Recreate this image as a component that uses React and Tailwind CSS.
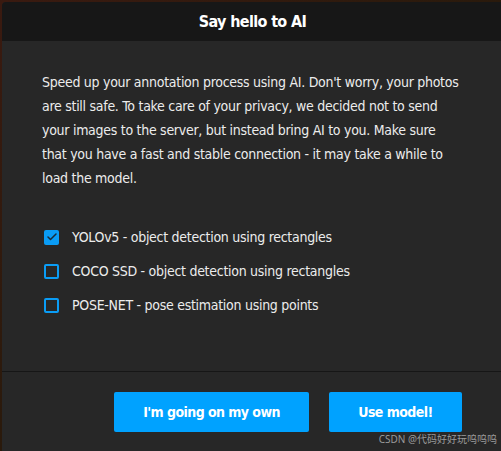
import { Check } from "lucide-react";

const FONT = { fontFamily: "'DejaVu Sans Condensed', 'DejaVu Sans', sans-serif" };

const lines = [
  "Speed up your annotation process using AI. Don't worry, your photos",
  "are still safe. To take care of your privacy, we decided not to send",
  "your images to the server, but instead bring AI to you. Make sure",
  "that you have a fast and stable connection - it may take a while to",
  "load the model.",
];

const models = [
  { name: "YOLOv5 - object detection using rectangles", checked: true },
  { name: "COCO SSD - object detection using rectangles", checked: false },
  { name: "POSE-NET - pose estimation using points", checked: false },
];

export default function App() {
  return (
    <div style={FONT} className="h-[451px] w-[501px] overflow-hidden bg-gradient-to-br from-[#3a1a10] via-[#2a1a0c] to-[#4a2a08] pl-[2px] pt-[2px]">
      <div className="flex h-[460px] w-[510px] flex-col overflow-hidden rounded-[4px] bg-[#272727] text-[#e6e6e6]">
        {/* Header */}
        <div className="flex h-[39px] shrink-0 items-center justify-center bg-[#171717] pr-[9px] pt-[1px] text-[16px] font-bold tracking-[-0.04em] text-white">
          Say hello to AI
        </div>

        {/* Body */}
        <div className="flex h-[330px] shrink-0 flex-col px-[40px] pt-[29px]">
          <div className="text-[14px] leading-[24px] tracking-[-0.02em] text-[#ececec]">
            {lines.map((l) => (
              <p key={l} className="whitespace-nowrap">{l}</p>
            ))}
          </div>
          <div className="mt-[37px] flex flex-col gap-[14px]">
            {models.map((m) => (
              <div key={m.name} className="flex h-[20px] items-center gap-[13px] pl-[2px]">
                <span
                  className={
                    m.checked
                      ? "flex h-[15px] w-[15px] items-center justify-center rounded-[2px] bg-[#0a9cf5]"
                      : "h-[15px] w-[15px] rounded-[2px] border-[2px] border-[#0a9cf5]"
                  }
                >
                  {m.checked && <Check size={12} strokeWidth={3} className="text-[#1b2a35]" />}
                </span>
                <span className="whitespace-nowrap text-[14px] tracking-[-0.02em] text-[#ececec]">{m.name}</span>
              </div>
            ))}
          </div>
        </div>

        {/* Footer */}
        <div className="relative flex grow items-start border-t border-[#161616] pl-[112px] pt-[20px]">
          <div className="flex gap-[20px]">
            <button className="flex h-[40px] w-[195px] items-center justify-center rounded-[2px] bg-[#00a2ff] text-[14px] font-bold tracking-[-0.04em] text-white">
              I'm going on my own
            </button>
            <button className="flex h-[40px] w-[133px] items-center justify-center rounded-[2px] bg-[#00a2ff] text-[14px] font-bold tracking-[-0.04em] text-white">
              Use model!
            </button>
          </div>
          <span
            style={{ fontFamily: "'Noto Sans', 'Noto Sans CJK SC', sans-serif" }}
            className="absolute right-[15px] top-[60px] whitespace-nowrap text-[10px] text-[#9a9a9a]"
          >
            CSDN @代码好好玩呜呜呜
          </span>
        </div>
      </div>
    </div>
  );
}
